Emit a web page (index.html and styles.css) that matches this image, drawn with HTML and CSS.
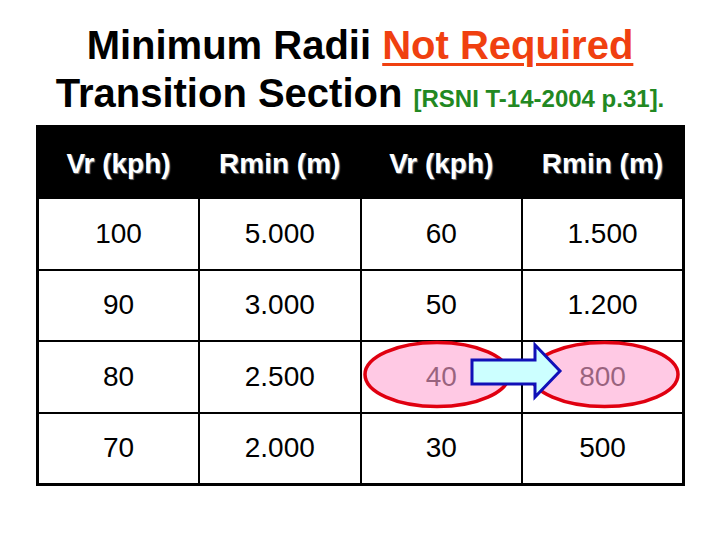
FILE: index.html
```html
<!DOCTYPE html>
<html lang="en">
<head>
    <meta charset="UTF-8">
    <link rel="stylesheet" href="styles.css">
    <title>Minimum Radii</title>
</head>
<body>
    <div class="title">
        <div>Minimum Radii <span class="hl">Not Required</span></div>
        <div>Transition Section <span class="ref">[RSNI T-14-2004 p.31].</span></div>
    </div>
    <div class="sheet">
        <table class="radii">
            <tr class="head">
                <th>Vr (kph)</th><th>Rmin (m)</th><th>Vr (kph)</th><th>Rmin (m)</th>
            </tr>
            <tr><td>100</td><td>5.000</td><td>60</td><td>1.500</td></tr>
            <tr><td>90</td><td>3.000</td><td>50</td><td>1.200</td></tr>
            <tr><td>80</td><td>2.500</td><td>40</td><td>800</td></tr>
            <tr><td>70</td><td>2.000</td><td>30</td><td>500</td></tr>
        </table>
        <svg class="marks" width="649" height="358" viewBox="0 0 649 358">
            <ellipse cx="401" cy="249.5" rx="72" ry="32" class="oval"/>
            <ellipse cx="568.5" cy="249.5" rx="73.5" ry="32" class="oval"/>
            <path class="arrow" d="M436 235 H499 V220 L524 246 L499 272 V259 H436 Z"/>
        </svg>
    </div>
</body>
</html>
```

FILE: styles.css
```css
body{margin:0;background:#fff;font-family:"Liberation Sans",Arial,sans-serif;}
.title{
    padding-top:21px;
    text-align:center;
    font-size:40px;
    font-weight:bold;
    line-height:48px;
    color:#000;
}
.title .hl{color:#f04010;text-decoration:underline;text-decoration-thickness:3px;text-underline-offset:4px;}
.title .ref{font-size:24px;line-height:1;color:#228822;}
.sheet{
    position:relative;
    width:649px;
    margin:8px 0 0 36px;
}
.radii{
    width:649px;
    border-collapse:collapse;
    border:3px solid #000;
    table-layout:fixed;
}
.radii th,.radii td{
    border:2px solid #000;
    text-align:center;
    font-size:28px;
    padding:0;
}
.radii td{height:69.5px;}
.radii .head th{
    height:66px;
    padding-top:3px;
    background:#000;
    color:#fff;
    font-weight:bold;
    text-shadow:1px 1px 1px #777;
}
.marks{position:absolute;left:0;top:0;}
.oval{fill:rgb(255,165,210);fill-opacity:0.6;stroke:#e00010;stroke-width:3.5;}
.arrow{fill:#ccffff;stroke:#1010b8;stroke-width:3;stroke-linejoin:miter;}
```
